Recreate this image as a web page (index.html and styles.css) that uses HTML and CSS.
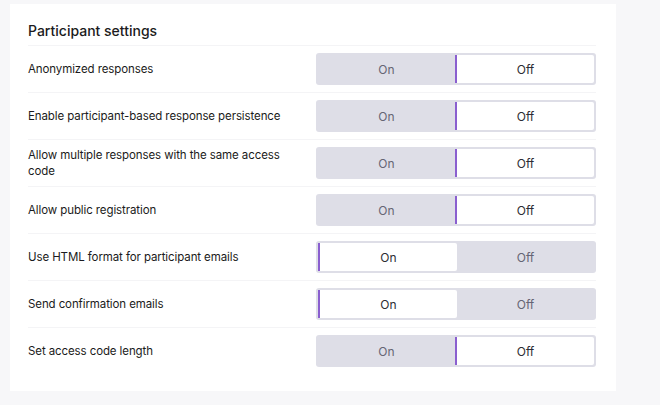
FILE: index.html
```html
<!DOCTYPE html>
<html>
	<head>
		<meta charset="UTF-8">
		<title>Participant settings</title>
		<link rel="stylesheet" href="styles.css">
	</head>
	<body>
		<div class="page">
			<div class="card">
				<h2 class="card-title">Participant settings</h2>
				<div class="row">
					<div class="label">Anonymized responses</div>
					<div class="toggle">
						<span class="opt">On</span>
						<span class="opt active">Off</span>
					</div>
				</div>
				<div class="row">
					<div class="label">Enable participant-based response persistence</div>
					<div class="toggle">
						<span class="opt">On</span>
						<span class="opt active">Off</span>
					</div>
				</div>
				<div class="row">
					<div class="label">Allow multiple responses with the same access code</div>
					<div class="toggle">
						<span class="opt">On</span>
						<span class="opt active">Off</span>
					</div>
				</div>
				<div class="row">
					<div class="label">Allow public registration</div>
					<div class="toggle">
						<span class="opt">On</span>
						<span class="opt active">Off</span>
					</div>
				</div>
				<div class="row">
					<div class="label">Use HTML format for participant emails</div>
					<div class="toggle">
						<span class="opt active">On</span>
						<span class="opt">Off</span>
					</div>
				</div>
				<div class="row">
					<div class="label">Send confirmation emails</div>
					<div class="toggle">
						<span class="opt active">On</span>
						<span class="opt">Off</span>
					</div>
				</div>
				<div class="row">
					<div class="label">Set access code length</div>
					<div class="toggle">
						<span class="opt">On</span>
						<span class="opt active">Off</span>
					</div>
				</div>
			</div>
		</div>
	</body>
</html>
```

FILE: styles.css
```css
* {
	margin: 0;
	padding: 0;
	box-sizing: border-box;
}
body {
	background: #f7f7f9;
	font-family: Inter, "Noto Sans", sans-serif;
	color: #1b1b20;
}
.page {
	padding: 4px 44px 14px 10px;
}
/* white panel */
.card {
	background: #fff;
	padding: 16px 20px 17px 18px;
}
.card-title {
	font-size: 14px;
	font-weight: 500;
	line-height: 22px;
	padding-bottom: 3px;
	border-bottom: 1px solid #f4f4f6;
}
.row {
	display: flex;
	align-items: center;
	justify-content: space-between;
	padding: 7px 0;
	border-bottom: 1px solid #f4f4f6;
}
.row:last-child {
	border-bottom: none;
}
.label {
	font-size: 11.5px;
	line-height: 16px;
	max-width: 262px;
	letter-spacing: -0.1px;
}
/* on / off switch */
.toggle {
	display: flex;
	width: 280px;
	height: 32px;
	padding: 2px;
	background: #dedee7;
	border-radius: 3px;
}
.opt {
	flex: 1;
	display: flex;
	align-items: center;
	justify-content: center;
	font-size: 12px;
	color: #656574;
}
.opt.active {
	background: #fff;
	color: #2c2c33;
	border-left: 2px solid #8a5fcf;
	border-radius: 0 2px 2px 0;
}
```
